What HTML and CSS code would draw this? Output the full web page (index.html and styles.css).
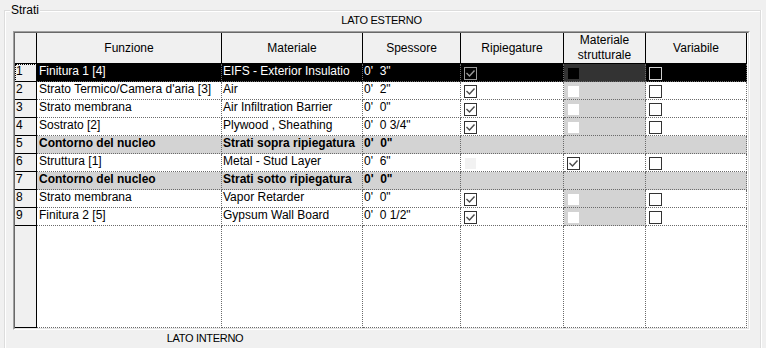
FILE: index.html
```html
<!DOCTYPE html>
<html>
<head>
<meta charset="utf-8">
<link rel="stylesheet" href="styles.css">
</head>
<body>
<div class="group">
  <span class="legend">Strati</span>
  <div class="side">LATO ESTERNO</div>
  <div class="frame">
    <div class="grid">
      <div class="h"></div>
      <div class="h">Funzione</div>
      <div class="h">Materiale</div>
      <div class="h">Spessore</div>
      <div class="h">Ripiegature</div>
      <div class="h">Materiale<br>strutturale</div>
      <div class="h">Variabile</div>

      <div class="rh focus">1</div>
      <div class="c sel">Finitura 1 [4]</div>
      <div class="c sel m">EIFS - Exterior Insulatio</div>
      <div class="c sel m">0'  3"</div>
      <div class="c sel k"><span class="cb sel-cb"><svg viewBox="0 0 11 11"><path d="M1.5 5 L4.5 8 L9.5 2.5"/></svg></span></div>
      <div class="c sel-ms k"><span class="cb dis-sel"></span></div>
      <div class="c sel k"><span class="cb sel-cb2"></span></div>

      <div class="rh">2</div>
      <div class="c">Strato Termico/Camera d'aria [3]</div>
      <div class="c m">Air</div>
      <div class="c m">0'  2"</div>
      <div class="c k"><span class="cb"><svg viewBox="0 0 11 11"><path d="M1.5 5 L4.5 8 L9.5 2.5"/></svg></span></div>
      <div class="c ms k"><span class="cb dis"></span></div>
      <div class="c k"><span class="cb"></span></div>

      <div class="rh">3</div>
      <div class="c">Strato membrana</div>
      <div class="c m">Air Infiltration Barrier</div>
      <div class="c m">0'  0"</div>
      <div class="c k"><span class="cb"><svg viewBox="0 0 11 11"><path d="M1.5 5 L4.5 8 L9.5 2.5"/></svg></span></div>
      <div class="c ms k"><span class="cb dis"></span></div>
      <div class="c k"><span class="cb"></span></div>

      <div class="rh">4</div>
      <div class="c">Sostrato [2]</div>
      <div class="c m">Plywood , Sheathing</div>
      <div class="c m">0'  0 3/4"</div>
      <div class="c k"><span class="cb"><svg viewBox="0 0 11 11"><path d="M1.5 5 L4.5 8 L9.5 2.5"/></svg></span></div>
      <div class="c ms k"><span class="cb dis"></span></div>
      <div class="c k"><span class="cb"></span></div>

      <div class="rh">5</div>
      <div class="c g b">Contorno del nucleo</div>
      <div class="c g b m">Strati sopra ripiegatura</div>
      <div class="c g b m">0'  0"</div>
      <div class="c g"></div>
      <div class="c g"></div>
      <div class="c g"></div>

      <div class="rh">6</div>
      <div class="c">Struttura [1]</div>
      <div class="c m">Metal - Stud Layer</div>
      <div class="c m">0'  6"</div>
      <div class="c k"><span class="cb dis-w"></span></div>
      <div class="c k"><span class="cb"><svg viewBox="0 0 11 11"><path d="M1.5 5 L4.5 8 L9.5 2.5"/></svg></span></div>
      <div class="c k"><span class="cb"></span></div>

      <div class="rh">7</div>
      <div class="c g b">Contorno del nucleo</div>
      <div class="c g b m">Strati sotto ripiegatura</div>
      <div class="c g b m">0'  0"</div>
      <div class="c g"></div>
      <div class="c g"></div>
      <div class="c g"></div>

      <div class="rh">8</div>
      <div class="c">Strato membrana</div>
      <div class="c m">Vapor Retarder</div>
      <div class="c m">0'  0"</div>
      <div class="c k"><span class="cb"><svg viewBox="0 0 11 11"><path d="M1.5 5 L4.5 8 L9.5 2.5"/></svg></span></div>
      <div class="c ms k"><span class="cb dis"></span></div>
      <div class="c k"><span class="cb"></span></div>

      <div class="rh">9</div>
      <div class="c">Finitura 2 [5]</div>
      <div class="c m">Gypsum Wall Board</div>
      <div class="c m">0'  0 1/2"</div>
      <div class="c k"><span class="cb"><svg viewBox="0 0 11 11"><path d="M1.5 5 L4.5 8 L9.5 2.5"/></svg></span></div>
      <div class="c ms k"><span class="cb dis"></span></div>
      <div class="c k"><span class="cb"></span></div>

      <div class="rh"></div>
      <div class="c"></div>
      <div class="c"></div>
      <div class="c"></div>
      <div class="c"></div>
      <div class="c"></div>
      <div class="c"></div>
    </div>
  </div>
  <div class="side inner">LATO INTERNO</div>
</div>
</body>
</html>
```

FILE: styles.css
```css
* { box-sizing: border-box; }

html, body {
  margin: 0;
  background: #f0f0f0;
  font: 12px/15px "Liberation Sans", Arial, sans-serif;
  color: #000;
  overflow: hidden;
}

.group {
  position: relative;
  margin: 10px 5px 0 4px;
  height: 420px;
  padding: 2px 0 0 8px;
  border: 1px solid #dcdcdc;
  border-bottom: none;
  box-shadow: inset 1px 1px 0 #fff, 1px 0 0 #fff;
}

.legend {
  position: absolute;
  top: -8px;
  left: 5px;
  padding: 0 1px;
  background: #f0f0f0;
}

.side {
  width: 737px;
  text-align: center;
  font-size: 11px;
  letter-spacing: -0.3px;
}

.side.inner {
  width: 384px;
  margin-top: 1px;
}

.frame {
  margin-top: 3px;
  width: 737px;
  border: 1px solid;
  border-color: #a0a0a0 #fff #fff #a0a0a0;
}

.grid {
  display: grid;
  grid-template-columns: 22px 185px 141px 98px 103px 82px 101px;
  grid-template-rows: 31px repeat(9, 18px) 102px;
  border: 1px solid;
  border-color: #696969 #e3e3e3 #e3e3e3 #696969;
  background: #fff;
}

.h {
  background: #f0f0f0;
  border-right: 1px solid #000;
  border-bottom: 1px solid #000;
  display: flex;
  align-items: center;
  justify-content: center;
  text-align: center;
}

.rh {
  background: #f0f0f0;
  border-right: 1px solid #000;
  border-bottom: 1px solid #000;
  padding: 0 0 0 1px;
}

.rh.focus {
  outline: 1px dotted #000;
  outline-offset: -1px;
}

.c {
  background: #fff;
  border-right: 1px dotted #6a6a6a;
  border-bottom: 1px dotted #6a6a6a;
  padding-left: 2px;
  white-space: pre;
  overflow: hidden;
  text-overflow: clip;
}

.c.m { padding-left: 1px; }

.c.k { padding: 3px 0 0 3px; }

.c.g { background: #d3d3d3; }
.c.ms { background: #d3d3d3; }
.c.b { font-weight: bold; }

.c.sel { background: #000; color: #fff; }
.c.sel-ms { background: #333; }

.cb {
  display: block;
  width: 13px;
  height: 13px;
  border: 1px solid #333;
  background: #fff;
}

.cb svg {
  display: block;
  width: 11px;
  height: 11px;
  fill: none;
  stroke: #4a4a4a;
  stroke-width: 1.4;
}

.cb.dis {
  border-color: #d3d3d3;
}

.cb.dis-w {
  border-color: #fff;
  background: #f2f2f2;
}

.cb.sel-cb {
  border-color: #9a9a9a;
  background: #000;
}

.cb.sel-cb svg { stroke: #9a9a9a; }

.cb.sel-cb2 {
  border-color: #cfcfcf;
  background: #000;
}

.cb.dis-sel {
  border-color: #333;
  background: #000;
}
```
